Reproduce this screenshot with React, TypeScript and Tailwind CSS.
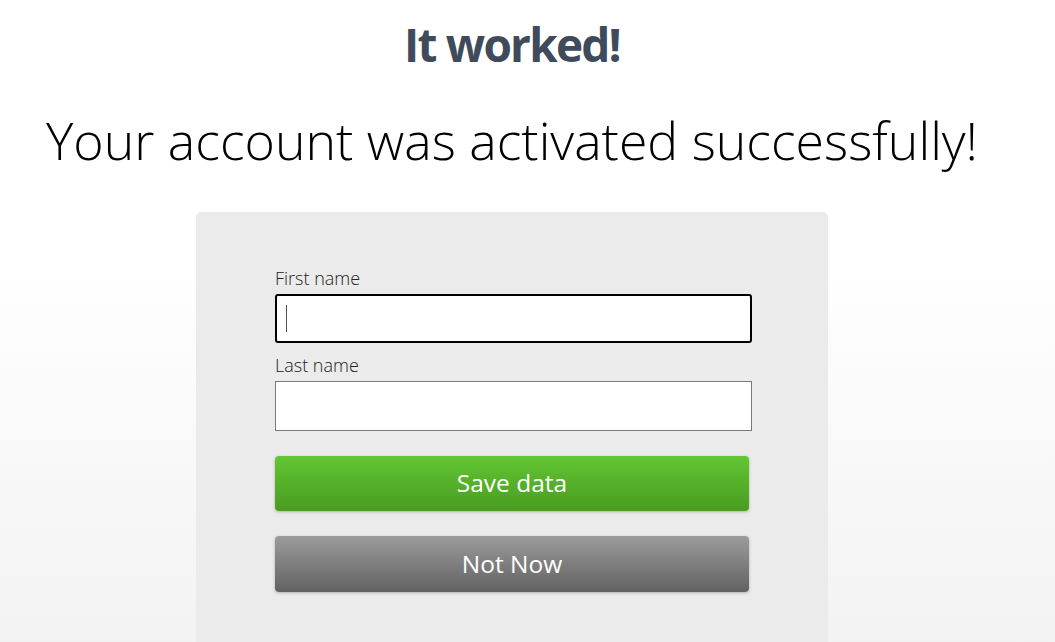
import { type FC } from 'react';

const font = { fontFamily: '"Open Sans", "Noto Sans", sans-serif' };

const App: FC = () => {
  return (
    <main
      className="min-h-[642px] w-full overflow-hidden bg-gradient-to-b from-white from-[40%] to-[#f2f2f2]"
      style={font}
    >
      <div className="flex w-[1024px] flex-col items-center">
        <h1 className="mt-[14px] text-[46px] leading-[60px] font-bold tracking-[-1.8px] text-[#3f4b5b]">
          It worked!
        </h1>
        <p className="mt-[31px] text-[51.8px] leading-[70px] font-light text-black">
          Your account was activated successfully!
        </p>
        <section className="mt-[37px] h-[440px] w-[632px] rounded-t-[5px] bg-[#ebebeb] pt-[55px] pl-[79px]">
          <label className="block text-[18px] leading-[22px] font-light text-[#222]">
            First name
          </label>
          <div className="relative mt-[5px] w-[477px]">
            <input className="block h-[49px] w-full rounded-[3px] border-2 border-black bg-white px-2 caret-transparent outline-none" />
            <span className="pointer-events-none absolute top-[11px] left-[11px] h-[27px] w-px bg-[#555]" />
          </div>
          <label className="mt-[11px] block text-[18px] leading-[22px] font-light text-[#222]">
            Last name
          </label>
          <input className="mt-[5px] block h-[50px] w-[477px] border border-[#7a7a7a] bg-white px-2 outline-none" />
          <button className="mt-[25px] block h-[55px] w-[474px] rounded-[4px] bg-gradient-to-b from-[#63c632] to-[#489c20] text-[24.5px] text-white shadow-[0_1px_3px_rgba(0,0,0,0.25)]">
            Save data
          </button>
          <button className="mt-[25px] block h-[56px] w-[474px] rounded-[4px] bg-gradient-to-b from-[#9c9c9c] to-[#626262] text-[24.5px] text-white shadow-[0_1px_3px_rgba(0,0,0,0.25)]">
            Not Now
          </button>
        </section>
      </div>
    </main>
  );
};

export default App;
